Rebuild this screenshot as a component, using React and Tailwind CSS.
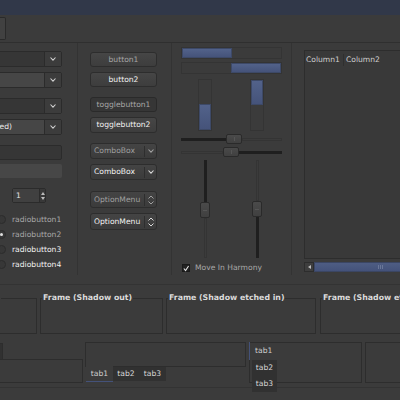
import React from 'react';

const Chevron = ({ color = '#cfcfcf' }) => (
  <svg width="6" height="4" viewBox="0 0 6 4">
    <path d="M0.5 0.5 L3 3.2 L5.5 0.5" stroke={color} fill="none" strokeWidth="1.1" />
  </svg>
);

const UpDown = ({ color = '#cfcfcf' }) => (
  <svg width="6" height="10" viewBox="0 0 6 10">
    <path d="M0.5 3.5 L3 1 L5.5 3.5" stroke={color} fill="none" strokeWidth="1" />
    <path d="M0.5 6.5 L3 9 L5.5 6.5" stroke={color} fill="none" strokeWidth="1" />
  </svg>
);

// left column combo (cut off on the left edge)
const Combo = ({ light, text, className = '' }) => (
  <div className={`w-[120px] h-[16px] flex border border-[#2b2b2b] rounded-[2px] ${className}`}>
    <div
      className={`flex-1 flex items-center justify-end pr-[32px] ${
        light ? 'bg-[#464646]' : 'bg-[#363636]'
      } text-[#ececec]`}
    >
      {text}
    </div>
    <div className="w-[17px] bg-[#3c3c3c] border-l border-[#2b2b2b] flex items-center justify-center">
      <Chevron />
    </div>
  </div>
);

const Button = ({ children, pressed, dim, className = '' }) => (
  <div
    className={`w-[67px] flex items-center justify-center border rounded-[3px] ${
      pressed
        ? 'bg-[#363636] border-[#2a2a2a]'
        : 'bg-linear-to-b from-[#464646] to-[#3d3d3d] border-[#2d2d2d]'
    } ${dim ? 'text-[#a6a6a6]' : 'text-[#f2f2f2]'} ${className}`}
  >
    {children}
  </div>
);

const ComboButton = ({ dim, className = '' }) => (
  <div
    className={`w-[67px] h-[16px] flex items-center border border-[#2d2d2d] rounded-[3px] bg-linear-to-b from-[#444] to-[#3b3b3b] ${className}`}
  >
    <span className={`flex-1 pl-[3px] ${dim ? 'text-[#a0a0a0]' : 'text-[#f2f2f2]'}`}>ComboBox</span>
    <div className="w-px h-[11px] bg-[#2e2e2e]" />
    <div className="w-[11px] flex justify-center">
      <Chevron color={dim ? '#a0a0a0' : '#d8d8d8'} />
    </div>
  </div>
);

const OptionMenu = ({ dim, className = '' }) => (
  <div
    className={`w-[67px] h-[17px] flex items-center border border-[#2d2d2d] rounded-[3px] bg-linear-to-b from-[#444] to-[#3b3b3b] ${className}`}
  >
    <span className={`flex-1 pl-[3px] ${dim ? 'text-[#a0a0a0]' : 'text-[#f2f2f2]'}`}>OptionMenu</span>
    <div className="w-px h-[12px] bg-[#2e2e2e]" />
    <div className="w-[11px] flex justify-center">
      <UpDown color={dim ? '#a0a0a0' : '#d8d8d8'} />
    </div>
  </div>
);

const Radio = ({ checked, dim, label }) => (
  <div className="h-[15px] self-start -ml-[3px] flex items-center gap-[6px]">
    <div className="w-[9px] h-[9px] rounded-full border border-[#2c2c2c] bg-[#373737] flex items-center justify-center">
      {checked && <div className="w-[3px] h-[3px] rounded-full bg-[#e0e0e0]" />}
    </div>
    <span className={dim ? 'text-[#a8a8a8]' : 'text-[#f2f2f2]'}>{label}</span>
  </div>
);

const Fill = ({ className = '' }) => (
  <div className={`bg-linear-to-b from-[#52628a] to-[#45537a] border border-[#3d4967] ${className}`} />
);

const Slider = ({ vertical }) => (
  <div
    className={`${
      vertical ? 'w-[10px] h-[16px]' : 'w-[16px] h-[10px]'
    } shrink-0 rounded-[2px] border border-[#2a2a2a] bg-linear-to-b from-[#4a4a4a] to-[#404040] flex items-center justify-center`}
  >
    <div className={vertical ? 'w-[4px] h-px bg-[#555]' : 'w-px h-[4px] bg-[#555]'} />
  </div>
);

const Frame = ({ label, className = '' }) => (
  <fieldset className={`h-[41px] shrink-0 border border-[#2d2d2d] ${className}`}>
    <legend className="ml-[1px] px-[1px] text-[7.8px] leading-[10px] font-bold text-[#dadada]">{label}</legend>
  </fieldset>
);

export default function App() {
  return (
    <div className="w-[400px] h-[400px] overflow-hidden bg-[#3b3b3b] font-['DejaVu_Sans','Liberation_Sans',sans-serif] text-[7.6px] leading-none text-[#d8d8d8] flex flex-col">
      {/* title strip */}
      <div className="h-[15px] shrink-0 bg-[#313849]" />

      {/* toolbar */}
      <div className="h-[28px] shrink-0 border-b border-[#2f2f2f] flex items-center">
        <div className="w-[6px] h-[23px] border border-l-0 border-[#2a2a2a] rounded-r-[2px] bg-[#414141]" />
      </div>

      {/* widgets */}
      <div className="h-[232px] shrink-0 flex">
        {/* combos, entries, spin, radios */}
        <div className="w-[78px] shrink-0 border-r border-[#333] flex flex-col items-end pr-[15px] pt-[8px]">
          <Combo />
          <Combo light className="mt-[5px]" />
          <Combo className="mt-[10px]" />
          <Combo light text="(selected)" className="mt-[5px]" />
          <div className="w-[120px] h-[15px] mt-[10px] border border-[#2b2b2b] rounded-[2px] bg-[#363636]" />
          <div className="w-[120px] h-[14px] mt-[4px] rounded-[2px] bg-[#474747]" />
          <div className="self-start ml-[12px] mt-[10px] w-[34px] h-[15px] flex border border-[#2b2b2b] rounded-[2px]">
            <div className="flex-1 bg-[#404040] flex items-center pl-[3px] text-[#e6e6e6]">1</div>
            <div className="w-[6px] bg-[#383838] border-l border-[#2b2b2b] flex flex-col items-center justify-center gap-[2px]">
              <svg width="4" height="3" viewBox="0 0 4 3"><path d="M0 3 L2 0 L4 3Z" fill="#bbb" /></svg>
              <svg width="4" height="3" viewBox="0 0 4 3"><path d="M0 0 L2 3 L4 0Z" fill="#bbb" /></svg>
            </div>
          </div>
          <div className="self-start mt-[9px] flex flex-col">
            <Radio dim label="radiobutton1" />
            <Radio dim checked label="radiobutton2" />
            <Radio label="radiobutton3" />
            <Radio label="radiobutton4" />
          </div>
        </div>

        {/* buttons */}
        <div className="w-[94px] shrink-0 border-r border-[#333] pl-[12px] pt-[9px] flex flex-col">
          <Button dim className="h-[15px]">button1</Button>
          <Button className="h-[15px] mt-[5px]">button2</Button>
          <Button dim pressed className="h-[15px] mt-[10px]">togglebutton1</Button>
          <Button className="h-[16px] mt-[5px]">togglebutton2</Button>
          <ComboButton dim className="mt-[10px]" />
          <ComboButton className="mt-[5px]" />
          <OptionMenu dim className="mt-[11px]" />
          <OptionMenu className="mt-[5px]" />
        </div>

        {/* progress bars and scales */}
        <div className="w-[120px] shrink-0 border-r border-[#333] pl-[9px] pt-[4px] flex flex-col">
          <div className="w-[101px] h-[12px] border border-[#343434] flex">
            <Fill className="w-[50px]" />
          </div>
          <div className="w-[101px] h-[12px] mt-[3px] border border-[#343434] flex justify-end">
            <Fill className="w-[50px]" />
          </div>
          <div className="flex mt-[5px]">
            <div className="ml-[17px] w-[14px] h-[52px] border border-[#343434] flex flex-col justify-end">
              <Fill className="h-[26px]" />
            </div>
            <div className="ml-[38px] w-[14px] h-[52px] border border-[#343434] flex flex-col">
              <Fill className="h-[25px]" />
            </div>
          </div>
          <div className="w-[101px] h-[10px] mt-[3px] flex items-center">
            <div className="w-[45px] h-[3px] bg-[#1f1f1f]" />
            <Slider />
            <div className="flex-1 h-[3px] border border-[#343434]" />
          </div>
          <div className="w-[101px] h-[10px] mt-[3px] flex items-center">
            <div className="w-[42px] h-[3px] border border-[#343434]" />
            <Slider />
            <div className="flex-1 h-[3px] bg-[#1f1f1f]" />
          </div>
          <div className="flex mt-[3px]">
            <div className="ml-[19px] w-[10px] h-[98px] flex flex-col items-center">
              <div className="w-[3px] h-[42px] bg-[#1f1f1f]" />
              <Slider vertical />
              <div className="w-[3px] flex-1 border border-[#343434]" />
            </div>
            <div className="ml-[42px] w-[10px] h-[98px] flex flex-col items-center">
              <div className="w-[3px] h-[41px] border border-[#343434]" />
              <Slider vertical />
              <div className="w-[3px] flex-1 bg-[#1f1f1f]" />
            </div>
          </div>
          <div className="h-[10px] mt-[5px] ml-[1px] flex items-center gap-[5px]">
            <div className="w-[8px] h-[8px] bg-[#222] border border-[#1a1a1a] flex items-center justify-center">
              <svg width="7" height="7" viewBox="0 0 7 7">
                <path d="M1 3.5 L3 6 L6.5 0.5" stroke="#e8e8e8" strokeWidth="1.2" fill="none" />
              </svg>
            </div>
            <span className="text-[#a8a8a8]">Move In Harmony</span>
          </div>
        </div>

        {/* tree view */}
        <div className="flex-1 min-w-0 pl-[12px] pt-[7px] flex flex-col overflow-hidden">
          <div className="w-[140px] h-[209px] border border-[#2d2d2d] bg-[#393939]">
            <div className="h-[18px] flex items-center text-[#cfcfcf]">
              <span className="w-[39px] pl-[1px] border-r border-[#2f2f2f] h-[12px] flex items-center">Column1</span>
              <span className="pl-[2px]">Column2</span>
            </div>
          </div>
          <div className="w-[140px] h-[10px] mt-[3px] flex">
            <div className="w-[10px] h-full border border-[#2d2d2d] bg-[#3e3e3e] flex items-center justify-center">
              <svg width="3" height="4" viewBox="0 0 3 4"><path d="M3 0 L0 2 L3 4Z" fill="#bdbdbd" /></svg>
            </div>
            <div className="flex-1 h-full bg-linear-to-b from-[#4e5d83] to-[#44527a] border border-[#3b4663] flex items-center">
              <div className="ml-[63px] flex gap-[1px]">
                <div className="w-px h-[4px] bg-[#6a7798]" />
                <div className="w-px h-[4px] bg-[#6a7798]" />
                <div className="w-px h-[4px] bg-[#6a7798]" />
              </div>
            </div>
          </div>
        </div>
      </div>

      {/* frames */}
      <div className="shrink-0 mt-[9px] border-t border-[#333] pt-[8px] flex">
        <Frame label="Frame (Shadow in)" className="w-[123px] -ml-[86px]" />
        <Frame label="Frame (Shadow out)" className="w-[123px] ml-[3px]" />
        <Frame label="Frame (Shadow etched in)" className="w-[150px] ml-[3px]" />
        <Frame label="Frame (Shadow etched out)" className="w-[150px] ml-[4px]" />
      </div>

      {/* notebooks */}
      <div className="shrink-0 mt-[8px] h-[41px] flex">
        <div className="w-[170px] -ml-[87px] shrink-0 flex flex-col">
          <div className="h-[17px] flex items-end pl-[9px]">
            <div className="w-[27px] h-[17px] border border-b-0 border-[#2d2d2d] flex items-center justify-center text-[#cfcfcf]">tab1</div>
            <div className="w-[27px] h-[16px] border border-b-0 border-[#2d2d2d] bg-[#313131] flex items-center justify-center">tab2</div>
            <div className="w-[27px] h-[16px] border border-b-0 border-[#2d2d2d] bg-[#313131] flex items-center justify-center">tab3</div>
          </div>
          <div className="h-[24px] border border-[#2d2d2d]" />
        </div>

        <div className="w-[161px] ml-[2px] shrink-0 flex flex-col">
          <div className="h-[25px] border border-[#2d2d2d]" />
          <div className="h-[16px] flex pl-[1px]">
            <div className="w-[27px] h-[16px] -mt-px bg-[#3b3b3b] border-b border-[#44527a] flex items-center justify-center text-[#cfcfcf]">tab1</div>
            <div className="w-[26px] h-[14px] bg-[#313131] flex items-center justify-center">tab2</div>
            <div className="w-[27px] h-[14px] bg-[#313131] flex items-center justify-center">tab3</div>
          </div>
        </div>

        <div className="w-[113px] ml-[3px] shrink-0 h-[41px] border border-[#2d2d2d] flex items-start">
          <div className="w-[27px] shrink-0 flex flex-col">
            <div className="relative shrink-0 h-[18px] -mt-px -ml-px border-l border-[#44527a] flex items-center pl-[5px] text-[#cfcfcf]">tab1</div>
            <div className="relative shrink-0 h-[16px] ml-[2px] bg-[#313131] flex items-center justify-center">tab2</div>
            <div className="relative shrink-0 h-[16px] ml-[2px] bg-[#313131] flex items-center justify-center">tab3</div>
          </div>
          <div className="flex-1" />
        </div>

        <div className="w-[60px] ml-[3px] shrink-0 h-[41px] border border-[#2d2d2d]" />
      </div>

      <div className="shrink-0 mt-[4px] border-t border-[#333]" />
    </div>
  );
}
